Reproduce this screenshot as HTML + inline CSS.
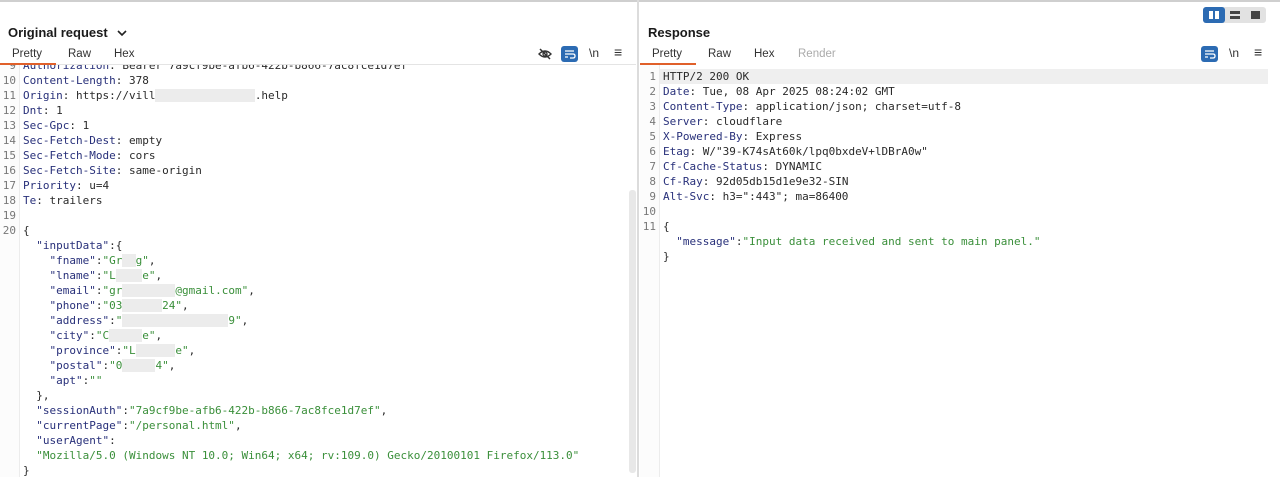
<!DOCTYPE html>
<html><head><meta charset="utf-8"><style>
*{margin:0;padding:0;box-sizing:border-box}
body{width:1280px;height:477px;background:#fff;position:relative;overflow:hidden;font-family:"Liberation Sans",sans-serif;color:#222}
.abs{position:absolute}
.title{font-weight:bold;font-size:13px;color:#1a1a1a}
.tab{font-size:11.5px;color:#333;top:48px}
.code{font-family:"DejaVu Sans Mono","Liberation Mono",monospace;font-size:11px;line-height:15px;white-space:pre;color:#2a2a2a}
.ln{font-family:"DejaVu Sans Mono",monospace;font-size:11px;line-height:15px;white-space:pre;color:#777;text-align:right}
.k{color:#28307a}
.s{color:#3a8f3a}
.r{background:#ececec;color:transparent}
</style></head><body>
<div class="abs" style="left:0;top:0;width:1280px;height:2px;background:#cfcfcf"></div>
<div class="abs" style="left:637px;top:0;width:2px;height:477px;background:#dcdcdc"></div>

<div class="abs title" style="left:8px;top:25px">Original request</div>
<svg class="abs" style="left:116px;top:28px" width="12" height="10"><path d="M2 3 L6 7 L10 3" fill="none" stroke="#222" stroke-width="1.6"/></svg>
<div class="abs tab" style="left:12px">Pretty</div>
<div class="abs tab" style="left:68px">Raw</div>
<div class="abs tab" style="left:114px">Hex</div>
<div class="abs" style="left:0;top:63px;width:56px;height:2px;background:#e0602a"></div>
<div class="abs" style="left:56px;top:64px;width:580px;height:1px;background:#e4e4e4"></div>
<svg class="abs" style="left:537px;top:46px" width="16" height="16"><path d="M2 8 Q8 2 14 8 Q8 14 2 8Z" fill="none" stroke="#333" stroke-width="1.4"/><circle cx="8" cy="8" r="2" fill="none" stroke="#333" stroke-width="1.3"/><path d="M3 3 L13 13" stroke="#333" stroke-width="1.5"/></svg>
<div class="abs" style="left:561px;top:46px;width:17px;height:16px;background:#2c6bb3;border-radius:3px"></div>
<svg class="abs" style="left:561px;top:46px" width="17" height="16"><path d="M4 5H13M4 8H12Q14 8 14 10Q14 12 12 12H9M4 11H7" fill="none" stroke="#fff" stroke-width="1.3"/></svg>
<div class="abs" style="left:589px;top:46px;font-size:12px;color:#333">\n</div>
<div class="abs" style="left:614px;top:44px;font-size:14px;color:#333">≡</div>

<div class="abs" style="left:0;top:65px;width:19px;height:412px;background:#fcfcfc"></div>
<div class="abs" style="left:19px;top:65px;width:1px;height:412px;background:#ececec"></div>
<div class="abs" style="left:629px;top:190px;width:7px;height:283px;background:#e8e8e8;border-radius:3px"></div>
<div class="abs" style="left:0;top:65px;width:628px;height:412px;overflow:hidden">
<div class="abs ln" style="left:0;top:-7px;width:16px">9
10
11
12
13
14
15
16
17
18
19
20</div>
<div class="abs code" style="left:23px;top:-7px"><span class="k">Authorization</span>: Bearer 7a9cf9be-afb6-422b-b866-7ac8fce1d7ef
<span class="k">Content-Length</span>: 378
<span class="k">Origin</span>: https://vill<span class="r">xxxxxxxxxxxxxxx</span>.help
<span class="k">Dnt</span>: 1
<span class="k">Sec-Gpc</span>: 1
<span class="k">Sec-Fetch-Dest</span>: empty
<span class="k">Sec-Fetch-Mode</span>: cors
<span class="k">Sec-Fetch-Site</span>: same-origin
<span class="k">Priority</span>: u=4
<span class="k">Te</span>: trailers

{
  <span class="k">"inputData"</span>:{
    <span class="k">"fname"</span>:<span class="s">"Gr<span class="r">xx</span>g"</span>,
    <span class="k">"lname"</span>:<span class="s">"L<span class="r">xxxx</span>e"</span>,
    <span class="k">"email"</span>:<span class="s">"gr<span class="r">xxxxxxxx</span>@gmail.com"</span>,
    <span class="k">"phone"</span>:<span class="s">"03<span class="r">xxxxxx</span>24"</span>,
    <span class="k">"address"</span>:<span class="s">"<span class="r">xxxxxxxxxxxxxxxx</span>9"</span>,
    <span class="k">"city"</span>:<span class="s">"C<span class="r">xxxxx</span>e"</span>,
    <span class="k">"province"</span>:<span class="s">"L<span class="r">xxxxxx</span>e"</span>,
    <span class="k">"postal"</span>:<span class="s">"0<span class="r">xxxxx</span>4"</span>,
    <span class="k">"apt"</span>:<span class="s">""</span>
  },
  <span class="k">"sessionAuth"</span>:<span class="s">"7a9cf9be-afb6-422b-b866-7ac8fce1d7ef"</span>,
  <span class="k">"currentPage"</span>:<span class="s">"/personal.html"</span>,
  <span class="k">"userAgent"</span>:
  <span class="s">"Mozilla/5.0 (Windows NT 10.0; Win64; x64; rv:109.0) Gecko/20100101 Firefox/113.0"</span>
}</div>
</div>

<div class="abs" style="left:1203px;top:7px;width:63px;height:16px;background:#e2e2e2;border-radius:3px"></div>
<div class="abs" style="left:1203px;top:7px;width:22px;height:16px;background:#2c6bb3;border-radius:3px"></div>
<div class="abs" style="left:1209px;top:11px;width:4px;height:8px;background:#fff"></div>
<div class="abs" style="left:1215px;top:11px;width:4px;height:8px;background:#fff"></div>
<div class="abs" style="left:1230px;top:11px;width:10px;height:3px;background:#444"></div>
<div class="abs" style="left:1230px;top:16px;width:10px;height:3px;background:#444"></div>
<div class="abs" style="left:1251px;top:11px;width:9px;height:8px;background:#444"></div>
<div class="abs title" style="left:648px;top:25px">Response</div>
<div class="abs tab" style="left:652px">Pretty</div>
<div class="abs tab" style="left:708px">Raw</div>
<div class="abs tab" style="left:754px">Hex</div>
<div class="abs tab" style="left:798px;color:#aaa">Render</div>
<div class="abs" style="left:640px;top:63px;width:56px;height:2px;background:#e0602a"></div>
<div class="abs" style="left:1201px;top:46px;width:17px;height:16px;background:#2c6bb3;border-radius:3px"></div>
<svg class="abs" style="left:1201px;top:46px" width="17" height="16"><path d="M4 5H13M4 8H12Q14 8 14 10Q14 12 12 12H9M4 11H7" fill="none" stroke="#fff" stroke-width="1.3"/></svg>
<div class="abs" style="left:1229px;top:46px;font-size:12px;color:#333">\n</div>
<div class="abs" style="left:1254px;top:44px;font-size:14px;color:#333">≡</div>

<div class="abs" style="left:640px;top:65px;width:19px;height:412px;background:#fcfcfc"></div>
<div class="abs" style="left:659px;top:65px;width:1px;height:412px;background:#ececec"></div>
<div class="abs" style="left:660px;top:69px;width:608px;height:15px;background:#efefef"></div>
<div class="abs ln" style="left:640px;top:69px;width:16px">1
2
3
4
5
6
7
8
9
10
11</div>
<div class="abs code" style="left:663px;top:69px">HTTP/2 200 OK
<span class="k">Date</span>: Tue, 08 Apr 2025 08:24:02 GMT
<span class="k">Content-Type</span>: application/json; charset=utf-8
<span class="k">Server</span>: cloudflare
<span class="k">X-Powered-By</span>: Express
<span class="k">Etag</span>: W/"39-K74sAt60k/lpq0bxdeV+lDBrA0w"
<span class="k">Cf-Cache-Status</span>: DYNAMIC
<span class="k">Cf-Ray</span>: 92d05db15d1e9e32-SIN
<span class="k">Alt-Svc</span>: h3=":443"; ma=86400

{
  <span class="k">"message"</span>:<span class="s">"Input data received and sent to main panel."</span>
}</div>
</body></html>
